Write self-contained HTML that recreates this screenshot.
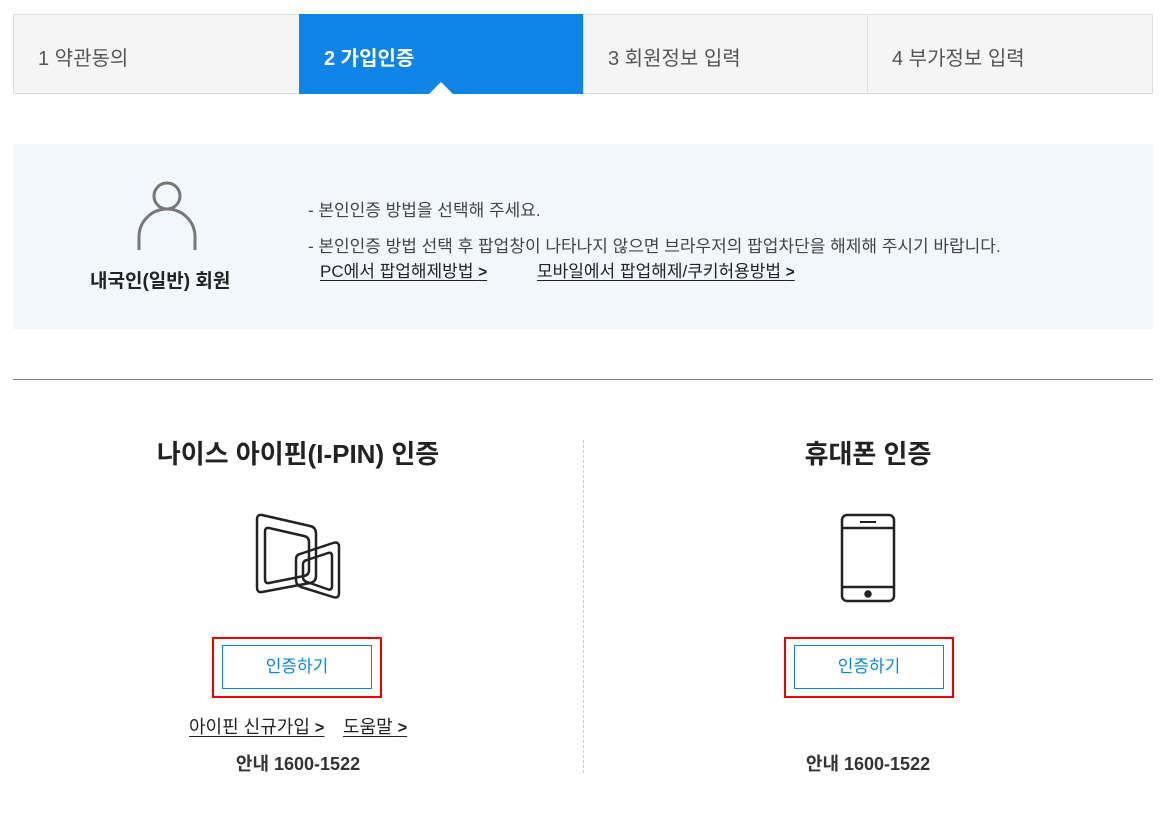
<!DOCTYPE html>
<html><head><meta charset="utf-8"><style>
*{margin:0;padding:0;box-sizing:border-box}
body{width:1164px;height:814px;background:#fff;font-family:"Liberation Sans","Noto Sans CJK KR",sans-serif;color:#222;position:relative;overflow:hidden}
.abs{position:absolute}
.tab{position:absolute;top:14px;height:80px;background:#f5f5f5;border:1px solid #ddd;font-size:20px;color:#555;padding:27px 0 0 24px}
.tab.on{background:#0f84e8;color:#fff;font-weight:bold;border-color:#0f84e8}
.u{text-decoration:underline;text-underline-offset:3px;color:#222}
.chev{font-weight:bold;font-size:0.9em}
.btnbox{position:absolute;border:2px solid #e00;width:170px;height:61px}
.btn{position:absolute;left:8px;top:6px;width:150px;height:44px;border:1px solid #0f84e8;color:#0f84e8;font-size:17px;text-align:center;line-height:42px;background:#fff}
</style></head><body>
<div class="tab" style="left:13px;width:287px">1 약관동의</div>
<div class="tab on" style="left:299px;width:285px">2 가입인증</div>
<div class="tab" style="left:583px;width:285px">3 회원정보 입력</div>
<div class="tab" style="left:867px;width:286px">4 부가정보 입력</div>
<div class="abs" style="left:429px;top:82px;width:0;height:0;border-left:12px solid transparent;border-right:12px solid transparent;border-bottom:12px solid #fff"></div>

<div class="abs" style="left:13px;top:144px;width:1140px;height:185px;background:#f2f7fd"></div>
<svg class="abs" style="left:130px;top:175px" width="75" height="80"><circle cx="37" cy="21" r="13" fill="none" stroke="#777" stroke-width="3"/><path d="M9 75 V62 a28 28 0 0 1 56 0 V75" fill="none" stroke="#777" stroke-width="3"/></svg>
<div class="abs" style="left:90px;top:266px;font-size:19px;font-weight:bold">내국인(일반) 회원</div>
<div class="abs" style="left:308px;top:196px;font-size:17px;color:#444">- 본인인증 방법을 선택해 주세요.</div>
<div class="abs" style="left:308px;top:232px;font-size:17px;color:#444">- 본인인증 방법 선택 후 팝업창이 나타나지 않으면 브라우저의 팝업차단을 해제해 주시기 바랍니다.</div>
<div class="abs u" style="left:320px;top:257px;font-size:17px">PC에서 팝업해제방법 <span class="chev">&gt;</span></div>
<div class="abs u" style="left:537px;top:257px;font-size:17px">모바일에서 팝업해제/쿠키허용방법 <span class="chev">&gt;</span></div>

<div class="abs" style="left:13px;top:379px;width:1140px;height:1px;background:#888"></div>
<div class="abs" style="left:583px;top:440px;height:333px;border-left:1px dashed #ccc"></div>

<div class="abs" style="left:13px;width:570px;top:434px;text-align:center;font-size:26px;font-weight:bold;color:#222">나이스 아이핀(I-PIN) 인증</div>
<svg class="abs" style="left:250px;top:510px" width="95" height="95" fill="none" stroke="#222" stroke-width="2.5" stroke-linejoin="round">
<path d="M12 5 L60 16 Q66 17 66 24 V66 Q66 72 60 73 L12 82 Q7 83 7 77 V10 Q7 4 12 5 Z"/>
<path d="M19 18 L54 26 Q59 27 59 32 V60 Q59 65 54 66 L19 73 Q15 74 15 69 V22 Q15 17 19 18 Z"/>
<path d="M50 44 L83 33 Q89 31 89 37 V83 Q89 89 83 87 L51 77 Q46 75 46 70 V49 Q46 45 50 44 Z"/>
<path d="M57 50 L78 43 Q82 42 82 46 V76 Q82 81 77 79 L57 72 Q53 71 53 67 V54 Q53 51 57 50 Z"/>
</svg>
<div class="btnbox" style="left:212px;top:637px"><div class="btn">인증하기</div></div>
<div class="abs u" style="left:189px;top:713px;font-size:18px">아이핀 신규가입 <span class="chev">&gt;</span></div>
<div class="abs u" style="left:343px;top:713px;font-size:18px">도움말 <span class="chev">&gt;</span></div>
<div class="abs" style="left:13px;width:570px;top:750px;text-align:center;font-size:18px;font-weight:bold;color:#333">안내 1600-1522</div>

<div class="abs" style="left:583px;width:570px;top:434px;text-align:center;font-size:26px;font-weight:bold;color:#222">휴대폰 인증</div>
<svg class="abs" style="left:838px;top:512px" width="60" height="92" fill="none" stroke="#222" stroke-width="2.5"><rect x="4" y="3" width="52" height="86" rx="5"/><line x1="4" y1="16" x2="56" y2="16"/><line x1="4" y1="75" x2="56" y2="75"/><line x1="22" y1="10" x2="38" y2="10" stroke-width="2"/><circle cx="30" cy="82" r="2.5" fill="#222"/></svg>
<div class="btnbox" style="left:784px;top:637px"><div class="btn">인증하기</div></div>
<div class="abs" style="left:583px;width:570px;top:750px;text-align:center;font-size:18px;font-weight:bold;color:#333">안내 1600-1522</div>
</body></html>
